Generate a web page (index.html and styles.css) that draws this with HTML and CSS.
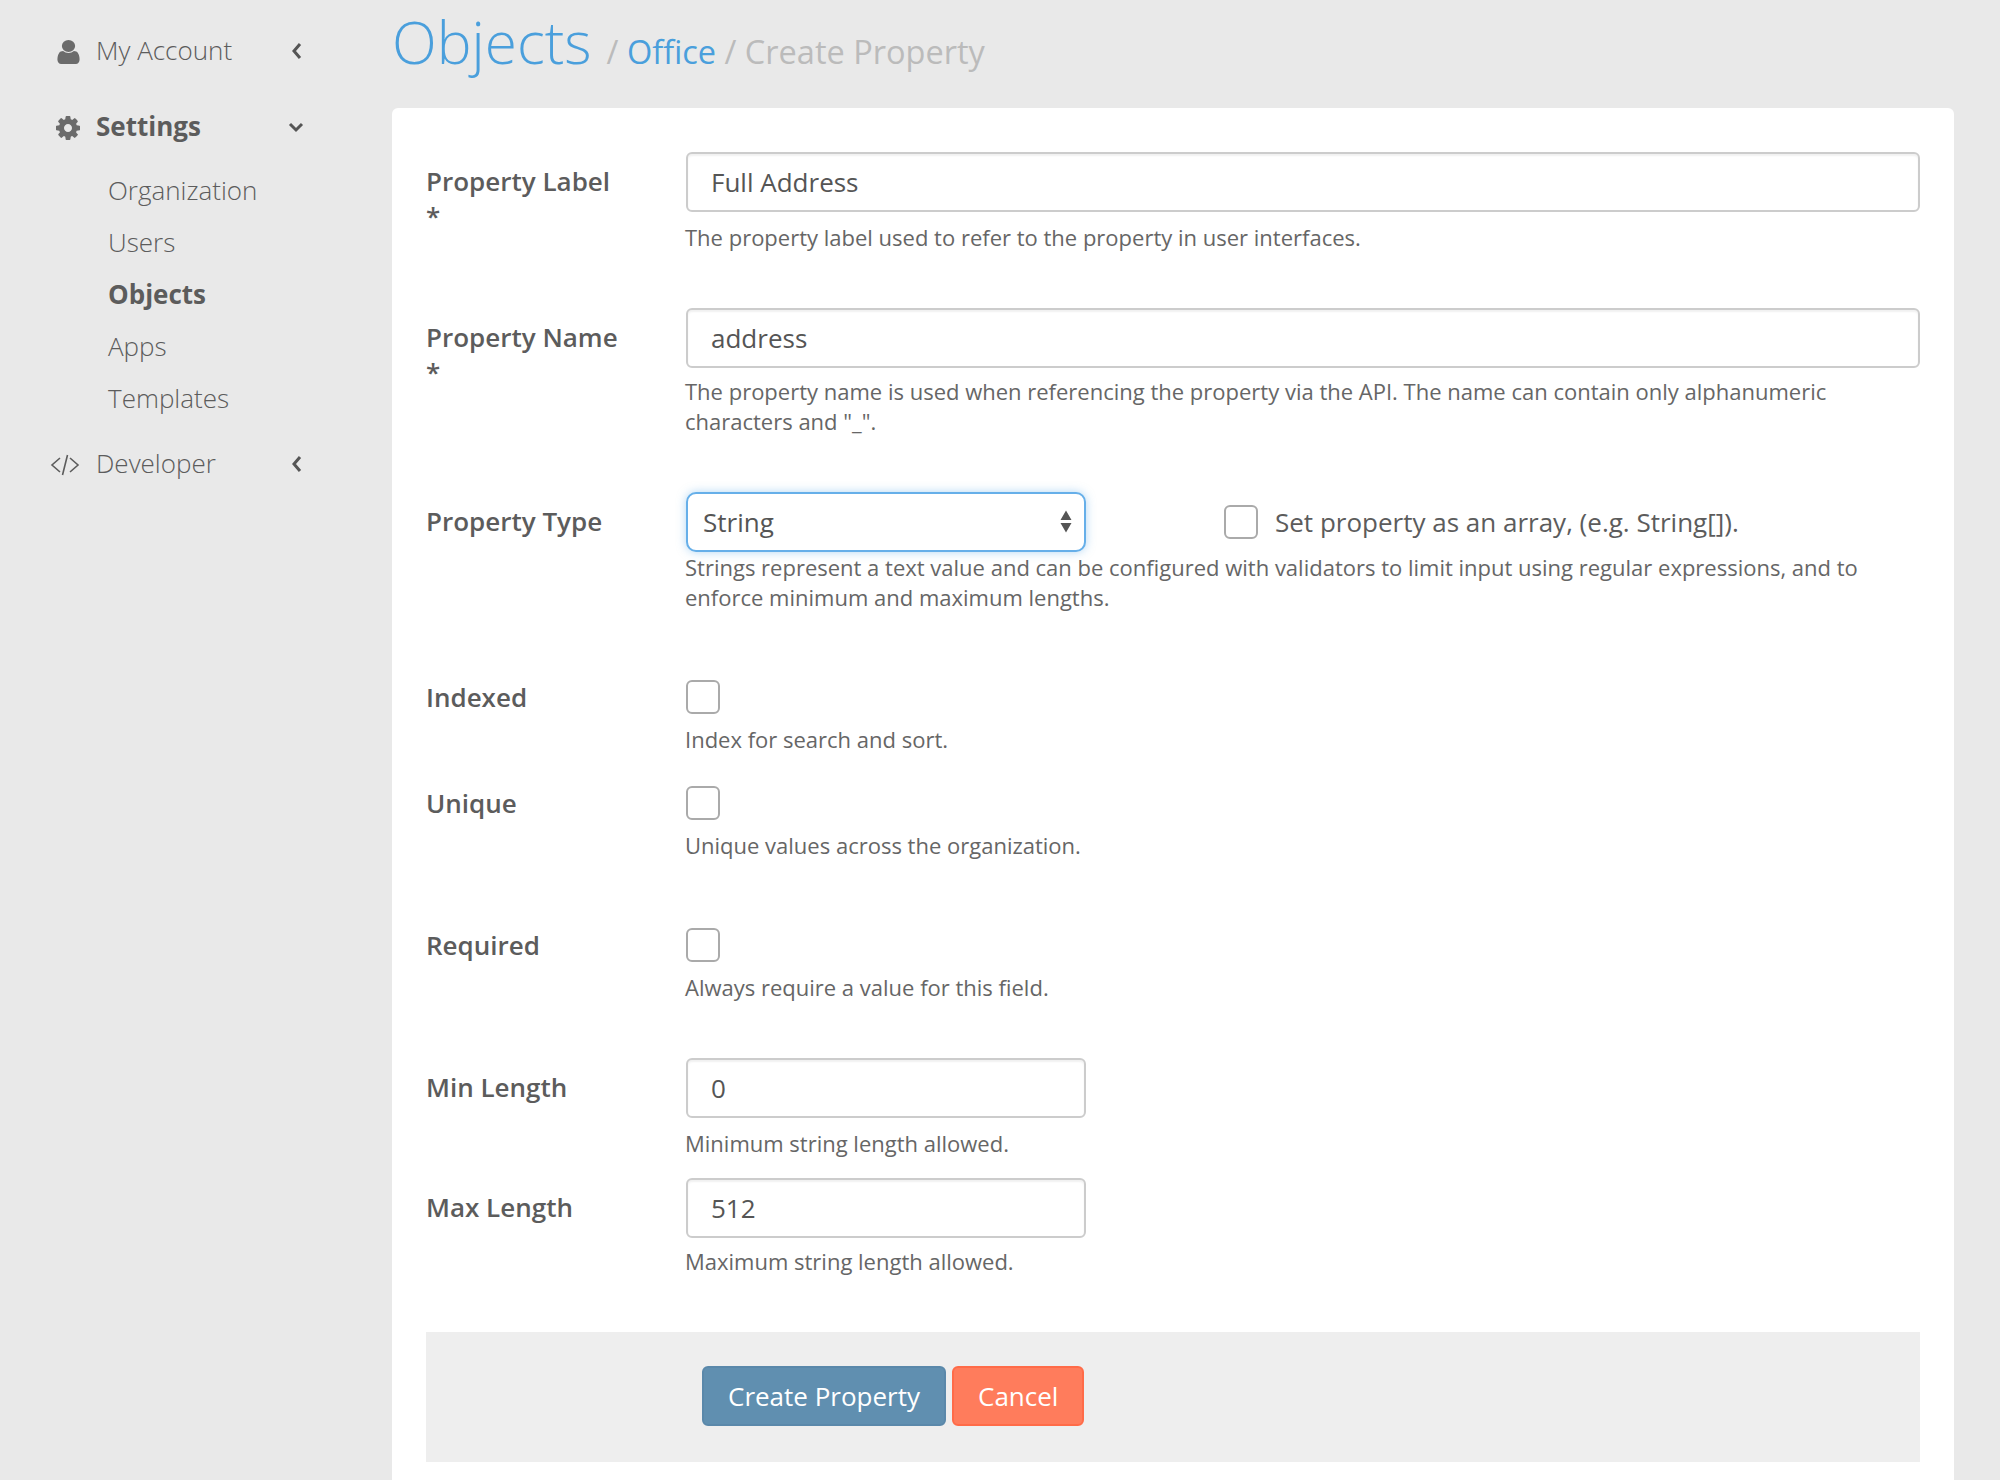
FILE: index.html
```html
<!DOCTYPE html>
<html lang="en">
<head>
  <meta charset="UTF-8" />
  <title>Create Property</title>
  <link rel="stylesheet" href="styles.css">
</head>
<body>
  <div class="page">
    <aside class="sidebar">
      <a class="nav-item nav-account">
        <svg class="nav-icon icon-user" viewBox="0 0 1792 1792" preserveAspectRatio="none"><path d="M1536 1399q0 109-62.500 187t-150.500 78h-854q-88 0-150.500-78t-62.500-187q0-85 8.500-160.500t31.500-152 58.500-131 94-89 134.500-34.500q131 128 313 128t313-128q76 0 134.500 34.500t94 89 58.500 131 31.500 152 8.500 160.500zm-256-887q0 159-112.500 271.500t-271.500 112.500-271.500-112.500-112.500-271.500 112.500-271.500 271.500-112.500 271.500 112.500 112.500 271.500z"/></svg>
        <span class="nav-text">My Account</span>
        <svg class="chevron" viewBox="0 0 12 16"><polyline points="9,1 3,8 9,15"/></svg>
      </a>
      <a class="nav-item nav-settings">
        <svg class="nav-icon icon-cog" viewBox="0 0 1792 1792"><path d="M1152 896q0-106-75-181t-181-75-181 75-75 181 75 181 181 75 181-75 75-181zm512-109v222q0 12-8 23t-20 13l-185 28q-19 54-39 91 35 50 107 138 10 12 10 25t-9 23q-27 37-99 108t-94 71q-12 0-26-9l-138-108q-44 23-91 38-16 136-29 186-7 28-36 28h-222q-14 0-24.500-8.500t-11.500-21.500l-28-184q-49-16-90-37l-141 107q-10 9-25 9-14 0-25-11-126-114-165-168-7-10-7-23 0-12 8-23 15-21 51-66.500t54-70.500q-27-50-41-99l-183-27q-13-2-21-12.500t-8-23.500v-222q0-12 8-23t19-13l186-28q14-46 39-92-40-57-107-138-10-12-10-24 0-10 9-23 26-36 98.500-107.500t94.500-71.500q13 0 26 10l138 107q44-23 91-38 16-136 29-186 7-28 36-28h222q14 0 24.500 8.500t11.500 21.500l28 184q49 16 90 37l142-107q9-9 24-9 13 0 25 10 129 119 165 170 7 8 7 22 0 12-8 23-15 21-51 66.500t-54 70.500q26 50 41 98l183 28q13 2 21 12.500t8 23.500z"/></svg>
        <span class="nav-text">Settings</span>
        <svg class="chevron chevron-down" viewBox="0 0 16 12"><polyline points="2,3 8,9 14,3"/></svg>
      </a>
      <ul class="subnav">
        <li>Organization</li>
        <li>Users</li>
        <li class="active">Objects</li>
        <li>Apps</li>
        <li>Templates</li>
      </ul>
      <a class="nav-item nav-developer">
        <svg class="nav-icon icon-code" viewBox="0 0 30 24"><path d="M10 5 2 12l8 7M12.500 22 17.500 2M20 5l8 7-8 7"/></svg>
        <span class="nav-text">Developer</span>
        <svg class="chevron" viewBox="0 0 12 16"><polyline points="9,1 3,8 9,15"/></svg>
      </a>
    </aside>

    <main class="content">
      <header class="page-header">
        <h1>Objects</h1>
        <span class="crumbs">/ <a>Office</a> / Create Property</span>
      </header>

      <section class="card">
        <form>
          <div class="form-row row-1">
            <label>Property Label *</label>
            <div>
              <input class="text-input" type="text" value="Full Address" />
              <p class="help">The property label used to refer to the property in user interfaces.</p>
            </div>
          </div>

          <div class="form-row row-2">
            <label>Property Name *</label>
            <div>
              <input class="text-input" type="text" value="address" />
              <p class="help help-tight">The property name is used when referencing the property via the API. The name can contain only alphanumeric characters and "_".</p>
            </div>
          </div>

          <div class="form-row row-3">
            <label>Property Type</label>
            <div>
              <div class="type-line">
                <div class="select-wrap">
                  <select class="type-select"><option>String</option></select>
                  <svg class="select-arrows" viewBox="0 0 12 24"><path d="M6 1 11.500 10.500H.5zM6 23 .5 13.500h11z"/></svg>
                </div>
                <label class="array-check"><input class="check" type="checkbox" /> Set property as an array, (e.g. String[]).</label>
              </div>
              <p class="help help-flush">Strings represent a text value and can be configured with validators to limit input using regular expressions, and to enforce minimum and maximum lengths.</p>
            </div>
          </div>

          <div class="form-row row-4">
            <label>Indexed</label>
            <div>
              <input class="check" type="checkbox" />
              <p class="help">Index for search and sort.</p>
            </div>
          </div>

          <div class="form-row row-5">
            <label>Unique</label>
            <div>
              <input class="check" type="checkbox" />
              <p class="help">Unique values across the organization.</p>
            </div>
          </div>

          <div class="form-row row-6">
            <label>Required</label>
            <div>
              <input class="check" type="checkbox" />
              <p class="help">Always require a value for this field.</p>
            </div>
          </div>

          <div class="form-row row-7">
            <label>Min Length</label>
            <div>
              <input class="text-input short" type="text" value="0" />
              <p class="help">Minimum string length allowed.</p>
            </div>
          </div>

          <div class="form-row row-8">
            <label>Max Length</label>
            <div>
              <input class="text-input short" type="text" value="512" />
              <p class="help help-tight">Maximum string length allowed.</p>
            </div>
          </div>

          <div class="form-actions">
            <button class="btn btn-primary" type="button">Create Property</button>
            <button class="btn btn-cancel" type="button">Cancel</button>
          </div>
        </form>
      </section>
    </main>
  </div>
</body>
</html>
```

FILE: styles.css
```css
html, body {
  margin: 0;
  height: 1480px;
  overflow: hidden;
}
body {
  background: #e9e9e9;
  color: #5c5c5c;
  font-family: "Open Sans", sans-serif;
  font-size: 26px;
}
.page {
  display: flex;
  height: 1480px;
}

/* sidebar */
.sidebar {
  width: 392px;
  flex: none;
  padding-top: 25px;
  box-sizing: border-box;
  font-weight: 300;
}
.nav-item {
  display: flex;
  align-items: center;
  height: 50px;
  position: relative;
  padding-left: 96px;
}
.nav-icon {
  position: absolute;
  fill: #6b6b6b;
}
.icon-user {
  left: 53px;
  top: 13px;
  width: 31px;
  height: 28px;
}
.icon-cog {
  left: 54px;
  top: 13px;
  width: 28px;
  height: 28px;
}
.icon-code {
  left: 50px;
  top: 15px;
  width: 30px;
  height: 24px;
  fill: none;
  stroke: #5c5c5c;
  stroke-width: 1.6;
}
.chevron {
  position: absolute;
  left: 291px;
  top: 18px;
  width: 12px;
  height: 16px;
  fill: none;
  stroke: #555;
  stroke-width: 3;
}
.chevron-down {
  left: 288px;
  top: 20px;
  width: 16px;
  height: 12px;
}
.nav-settings {
  margin-top: 26px;
  font-weight: 700;
}
.subnav {
  list-style: none;
  margin: 13px 0 0;
  padding: 0 0 0 108px;
}
.subnav li {
  height: 52px;
  line-height: 52px;
}
.subnav .active {
  font-weight: 700;
}
.nav-developer {
  margin-top: 14px;
}

/* main */
.content {
  flex: 1;
  padding-right: 46px;
  min-width: 0;
}
.page-header {
  height: 108px;
  display: flex;
  align-items: baseline;
  color: #bbb;
  font-size: 32.5px;
}
h1 {
  margin: 0 15px 0 0;
  color: #4a9fdc;
  font-size: 58.500px;
  font-weight: 300;
  line-height: 82px;
}
.crumbs {
  white-space: pre;
}
.crumbs a {
  color: #4a9fdc;
  font-weight: 500;
}
.card {
  background: #fff;
  border-radius: 6px;
  padding: 44px 34px 40px;
  height: 1400px;
  box-sizing: border-box;
}

/* form rows */
.form-row {
  display: grid;
  grid-template-columns: 259px 1234px;
  margin-bottom: 55px;
}
.form-row > label {
  font-weight: 600;
  padding: 12px 60px 0 0;
  line-height: 35px;
}
.row-1 { margin-bottom: 56px; }
.row-2 { margin-bottom: 56px; }
.row-3 { margin-bottom: 67px; }
.row-4 { margin-bottom: 32px; }
.row-5 { margin-bottom: 68px; }
.row-6 { margin-bottom: 56px; }
.row-7 { margin-bottom: 20px; }
.row-8 { margin-bottom: 56px; }
.row-4 > label, .row-5 > label, .row-6 > label {
  padding-top: 0;
}
.text-input, .type-select {
  display: block;
  width: 1234px;
  margin-left: 1px;
  height: 60px;
  box-sizing: border-box;
  border: 2px solid #ccc;
  border-radius: 6px;
  padding: 0 23px;
  font: 26px "Open Sans", sans-serif;
  color: #555;
  background: #fff;
  box-shadow: inset 0 2px 2px rgba(0, 0, 0, .06);
}
.short {
  width: 400px;
}
.type-line {
  display: flex;
  align-items: center;
}
.select-wrap {
  width: 401px;
  position: relative;
  margin-right: 137px;
}
.type-select {
  appearance: none;
  width: 400px;
  padding: 0 15px;
  border-color: #66afe9;
  border-radius: 10px;
  box-shadow: 0 0 10px rgba(102, 175, 233, .5);
  outline: none;
}
.select-arrows {
  position: absolute;
  right: 14px;
  top: 16px;
  width: 12px;
  height: 27px;
  fill: #555;
}
.array-check {
  display: flex;
  align-items: center;
  gap: 17px;
}
.check {
  appearance: none;
  display: block;
  margin: 0 0 0 1px;
  width: 34px;
  height: 34px;
  box-sizing: border-box;
  border: 2px solid #aaa;
  border-radius: 6px;
  background: #fff;
}
.help {
  margin: 10px 0 0;
  font-size: 22px;
  line-height: 30px;
  color: #666;
}
.help-tight {
  margin-top: 8px;
}
.help-flush {
  margin-top: 0;
}
.row-3 .help {
  margin-bottom: 1px;
}

/* footer */
.form-actions {
  background: #eee;
  height: 130px;
  box-sizing: border-box;
  padding: 34px 0 0 276px;
  display: flex;
  gap: 6px;
}
.btn {
  height: 60px;
  box-sizing: border-box;
  padding: 0 24px;
  border-radius: 6px;
  border: 2px solid;
  color: #fff;
  font: 26px "Open Sans", sans-serif;
}
.btn-primary {
  background: #608fb0;
  border-color: #5a88aa;
}
.btn-cancel {
  background: #ff7c5c;
  border-color: #ff6b48;
}
```
